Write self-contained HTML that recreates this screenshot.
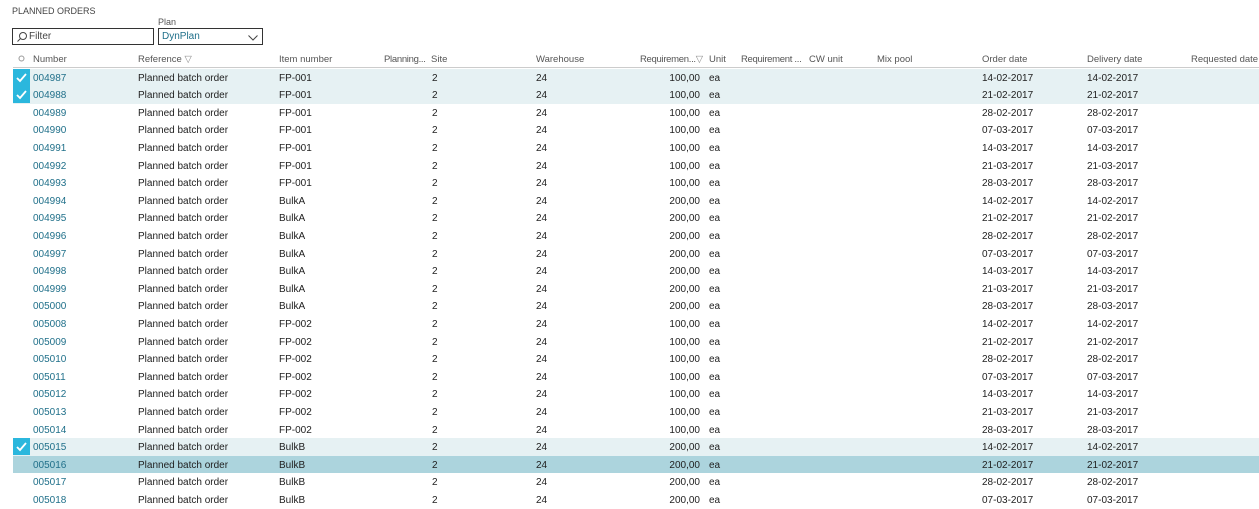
<!DOCTYPE html>
<html><head><meta charset="utf-8"><style>
*{margin:0;padding:0;box-sizing:border-box}
body{width:1259px;height:497px;overflow:hidden;background:#fff;font-family:"Liberation Sans",sans-serif;font-size:10px;color:#212121;position:relative}
.a{position:absolute;white-space:nowrap}
.title{left:12px;top:6px;font-size:9px;color:#444}
.box{position:absolute;border:1px solid #333;height:17px;top:28px;background:#fff}
.hd{color:#555;top:54px;font-size:9.5px}
.r{position:absolute;left:13px;width:1246px;height:17.6px}
.r span{position:absolute;top:4px;white-space:nowrap}
.n{left:20px;color:#20708a}
.rf{left:125px}.it{left:266px}.st{left:419px}.wh{left:523px}.q{left:600px;width:87px;text-align:right}.u{left:696px}.od{left:969px}.dd{left:1074px}
.sel{background:#e6f1f3}
.hi{background:#acd4dd}
.ck{position:absolute;left:0;top:0;width:17px;height:17px;background:#2bb7dd}
</style></head><body>
<div class="a title">PLANNED ORDERS</div>
<div class="a" style="left:158px;top:17px;font-size:9px;color:#555">Plan</div>
<div class="box" style="left:12px;width:142px"><svg width="12" height="12" style="position:absolute;left:3px;top:2px" viewBox="0 0 12 12"><circle cx="7" cy="5" r="3.5" fill="none" stroke="#444" stroke-width="1"/><path d="M4.5 7.5L1.5 10.5" stroke="#444" stroke-width="1"/></svg><span class="a" style="left:16px;top:2px;color:#444">Filter</span></div>
<div class="box" style="left:158px;width:105px"><span class="a" style="left:3px;top:2px;color:#20708a">DynPlan</span><svg width="10" height="6" style="position:absolute;right:4px;top:6px" viewBox="0 0 10 6"><path d="M0.5 0.5L5 5L9.5 0.5" fill="none" stroke="#444"/></svg></div>
<svg class="a" style="left:18px;top:55px" width="7" height="7"><circle cx="3.5" cy="3.5" r="2.5" fill="none" stroke="#999"/></svg>
<div class="a hd" style="left:33px">Number</div>
<div class="a hd" style="left:138px">Reference <span style="color:#888">▽</span></div>
<div class="a hd" style="left:279px">Item number</div>
<div class="a hd" style="left:384px;letter-spacing:-0.3px">Planning...</div>
<div class="a hd" style="left:431px">Site</div>
<div class="a hd" style="left:536px">Warehouse</div>
<div class="a hd" style="left:640px;letter-spacing:-0.3px">Requiremen...<span style="color:#888">▽</span></div>
<div class="a hd" style="left:709px">Unit</div>
<div class="a hd" style="left:741px;letter-spacing:-0.3px">Requirement ...</div>
<div class="a hd" style="left:809px">CW unit</div>
<div class="a hd" style="left:877px">Mix pool</div>
<div class="a hd" style="left:982px">Order date</div>
<div class="a hd" style="left:1087px">Delivery date</div>
<div class="a hd" style="left:1191px">Requested date</div>
<div class="a" style="left:13px;top:67px;width:1246px;height:1px;background:#ccc"></div>

<div class="r sel" style="top:68.5px"><div class="ck"><svg width="17" height="17"><path d="M4 9L7 12L13 5" fill="none" stroke="#fff" stroke-width="1.8"/></svg></div><span class="n">004987</span><span class="rf">Planned batch order</span><span class="it">FP-001</span><span class="st">2</span><span class="wh">24</span><span class="q">100,00</span><span class="u">ea</span><span class="od">14-02-2017</span><span class="dd">14-02-2017</span></div>
<div class="r sel" style="top:86.1px"><div class="ck"><svg width="17" height="17"><path d="M4 9L7 12L13 5" fill="none" stroke="#fff" stroke-width="1.8"/></svg></div><span class="n">004988</span><span class="rf">Planned batch order</span><span class="it">FP-001</span><span class="st">2</span><span class="wh">24</span><span class="q">100,00</span><span class="u">ea</span><span class="od">21-02-2017</span><span class="dd">21-02-2017</span></div>
<div class="r" style="top:103.7px"><span class="n">004989</span><span class="rf">Planned batch order</span><span class="it">FP-001</span><span class="st">2</span><span class="wh">24</span><span class="q">100,00</span><span class="u">ea</span><span class="od">28-02-2017</span><span class="dd">28-02-2017</span></div>
<div class="r" style="top:121.3px"><span class="n">004990</span><span class="rf">Planned batch order</span><span class="it">FP-001</span><span class="st">2</span><span class="wh">24</span><span class="q">100,00</span><span class="u">ea</span><span class="od">07-03-2017</span><span class="dd">07-03-2017</span></div>
<div class="r" style="top:138.9px"><span class="n">004991</span><span class="rf">Planned batch order</span><span class="it">FP-001</span><span class="st">2</span><span class="wh">24</span><span class="q">100,00</span><span class="u">ea</span><span class="od">14-03-2017</span><span class="dd">14-03-2017</span></div>
<div class="r" style="top:156.5px"><span class="n">004992</span><span class="rf">Planned batch order</span><span class="it">FP-001</span><span class="st">2</span><span class="wh">24</span><span class="q">100,00</span><span class="u">ea</span><span class="od">21-03-2017</span><span class="dd">21-03-2017</span></div>
<div class="r" style="top:174.1px"><span class="n">004993</span><span class="rf">Planned batch order</span><span class="it">FP-001</span><span class="st">2</span><span class="wh">24</span><span class="q">100,00</span><span class="u">ea</span><span class="od">28-03-2017</span><span class="dd">28-03-2017</span></div>
<div class="r" style="top:191.7px"><span class="n">004994</span><span class="rf">Planned batch order</span><span class="it">BulkA</span><span class="st">2</span><span class="wh">24</span><span class="q">200,00</span><span class="u">ea</span><span class="od">14-02-2017</span><span class="dd">14-02-2017</span></div>
<div class="r" style="top:209.3px"><span class="n">004995</span><span class="rf">Planned batch order</span><span class="it">BulkA</span><span class="st">2</span><span class="wh">24</span><span class="q">200,00</span><span class="u">ea</span><span class="od">21-02-2017</span><span class="dd">21-02-2017</span></div>
<div class="r" style="top:226.9px"><span class="n">004996</span><span class="rf">Planned batch order</span><span class="it">BulkA</span><span class="st">2</span><span class="wh">24</span><span class="q">200,00</span><span class="u">ea</span><span class="od">28-02-2017</span><span class="dd">28-02-2017</span></div>
<div class="r" style="top:244.5px"><span class="n">004997</span><span class="rf">Planned batch order</span><span class="it">BulkA</span><span class="st">2</span><span class="wh">24</span><span class="q">200,00</span><span class="u">ea</span><span class="od">07-03-2017</span><span class="dd">07-03-2017</span></div>
<div class="r" style="top:262.1px"><span class="n">004998</span><span class="rf">Planned batch order</span><span class="it">BulkA</span><span class="st">2</span><span class="wh">24</span><span class="q">200,00</span><span class="u">ea</span><span class="od">14-03-2017</span><span class="dd">14-03-2017</span></div>
<div class="r" style="top:279.7px"><span class="n">004999</span><span class="rf">Planned batch order</span><span class="it">BulkA</span><span class="st">2</span><span class="wh">24</span><span class="q">200,00</span><span class="u">ea</span><span class="od">21-03-2017</span><span class="dd">21-03-2017</span></div>
<div class="r" style="top:297.3px"><span class="n">005000</span><span class="rf">Planned batch order</span><span class="it">BulkA</span><span class="st">2</span><span class="wh">24</span><span class="q">200,00</span><span class="u">ea</span><span class="od">28-03-2017</span><span class="dd">28-03-2017</span></div>
<div class="r" style="top:314.9px"><span class="n">005008</span><span class="rf">Planned batch order</span><span class="it">FP-002</span><span class="st">2</span><span class="wh">24</span><span class="q">100,00</span><span class="u">ea</span><span class="od">14-02-2017</span><span class="dd">14-02-2017</span></div>
<div class="r" style="top:332.5px"><span class="n">005009</span><span class="rf">Planned batch order</span><span class="it">FP-002</span><span class="st">2</span><span class="wh">24</span><span class="q">100,00</span><span class="u">ea</span><span class="od">21-02-2017</span><span class="dd">21-02-2017</span></div>
<div class="r" style="top:350.1px"><span class="n">005010</span><span class="rf">Planned batch order</span><span class="it">FP-002</span><span class="st">2</span><span class="wh">24</span><span class="q">100,00</span><span class="u">ea</span><span class="od">28-02-2017</span><span class="dd">28-02-2017</span></div>
<div class="r" style="top:367.7px"><span class="n">005011</span><span class="rf">Planned batch order</span><span class="it">FP-002</span><span class="st">2</span><span class="wh">24</span><span class="q">100,00</span><span class="u">ea</span><span class="od">07-03-2017</span><span class="dd">07-03-2017</span></div>
<div class="r" style="top:385.3px"><span class="n">005012</span><span class="rf">Planned batch order</span><span class="it">FP-002</span><span class="st">2</span><span class="wh">24</span><span class="q">100,00</span><span class="u">ea</span><span class="od">14-03-2017</span><span class="dd">14-03-2017</span></div>
<div class="r" style="top:402.9px"><span class="n">005013</span><span class="rf">Planned batch order</span><span class="it">FP-002</span><span class="st">2</span><span class="wh">24</span><span class="q">100,00</span><span class="u">ea</span><span class="od">21-03-2017</span><span class="dd">21-03-2017</span></div>
<div class="r" style="top:420.5px"><span class="n">005014</span><span class="rf">Planned batch order</span><span class="it">FP-002</span><span class="st">2</span><span class="wh">24</span><span class="q">100,00</span><span class="u">ea</span><span class="od">28-03-2017</span><span class="dd">28-03-2017</span></div>
<div class="r sel" style="top:438.1px"><div class="ck"><svg width="17" height="17"><path d="M4 9L7 12L13 5" fill="none" stroke="#fff" stroke-width="1.8"/></svg></div><span class="n">005015</span><span class="rf">Planned batch order</span><span class="it">BulkB</span><span class="st">2</span><span class="wh">24</span><span class="q">200,00</span><span class="u">ea</span><span class="od">14-02-2017</span><span class="dd">14-02-2017</span></div>
<div class="r hi" style="top:455.7px"><span class="n">005016</span><span class="rf">Planned batch order</span><span class="it">BulkB</span><span class="st">2</span><span class="wh">24</span><span class="q">200,00</span><span class="u">ea</span><span class="od">21-02-2017</span><span class="dd">21-02-2017</span></div>
<div class="r" style="top:473.3px"><span class="n">005017</span><span class="rf">Planned batch order</span><span class="it">BulkB</span><span class="st">2</span><span class="wh">24</span><span class="q">200,00</span><span class="u">ea</span><span class="od">28-02-2017</span><span class="dd">28-02-2017</span></div>
<div class="r" style="top:491px"><span class="n">005018</span><span class="rf">Planned batch order</span><span class="it">BulkB</span><span class="st">2</span><span class="wh">24</span><span class="q">200,00</span><span class="u">ea</span><span class="od">07-03-2017</span><span class="dd">07-03-2017</span></div>
</body></html>
